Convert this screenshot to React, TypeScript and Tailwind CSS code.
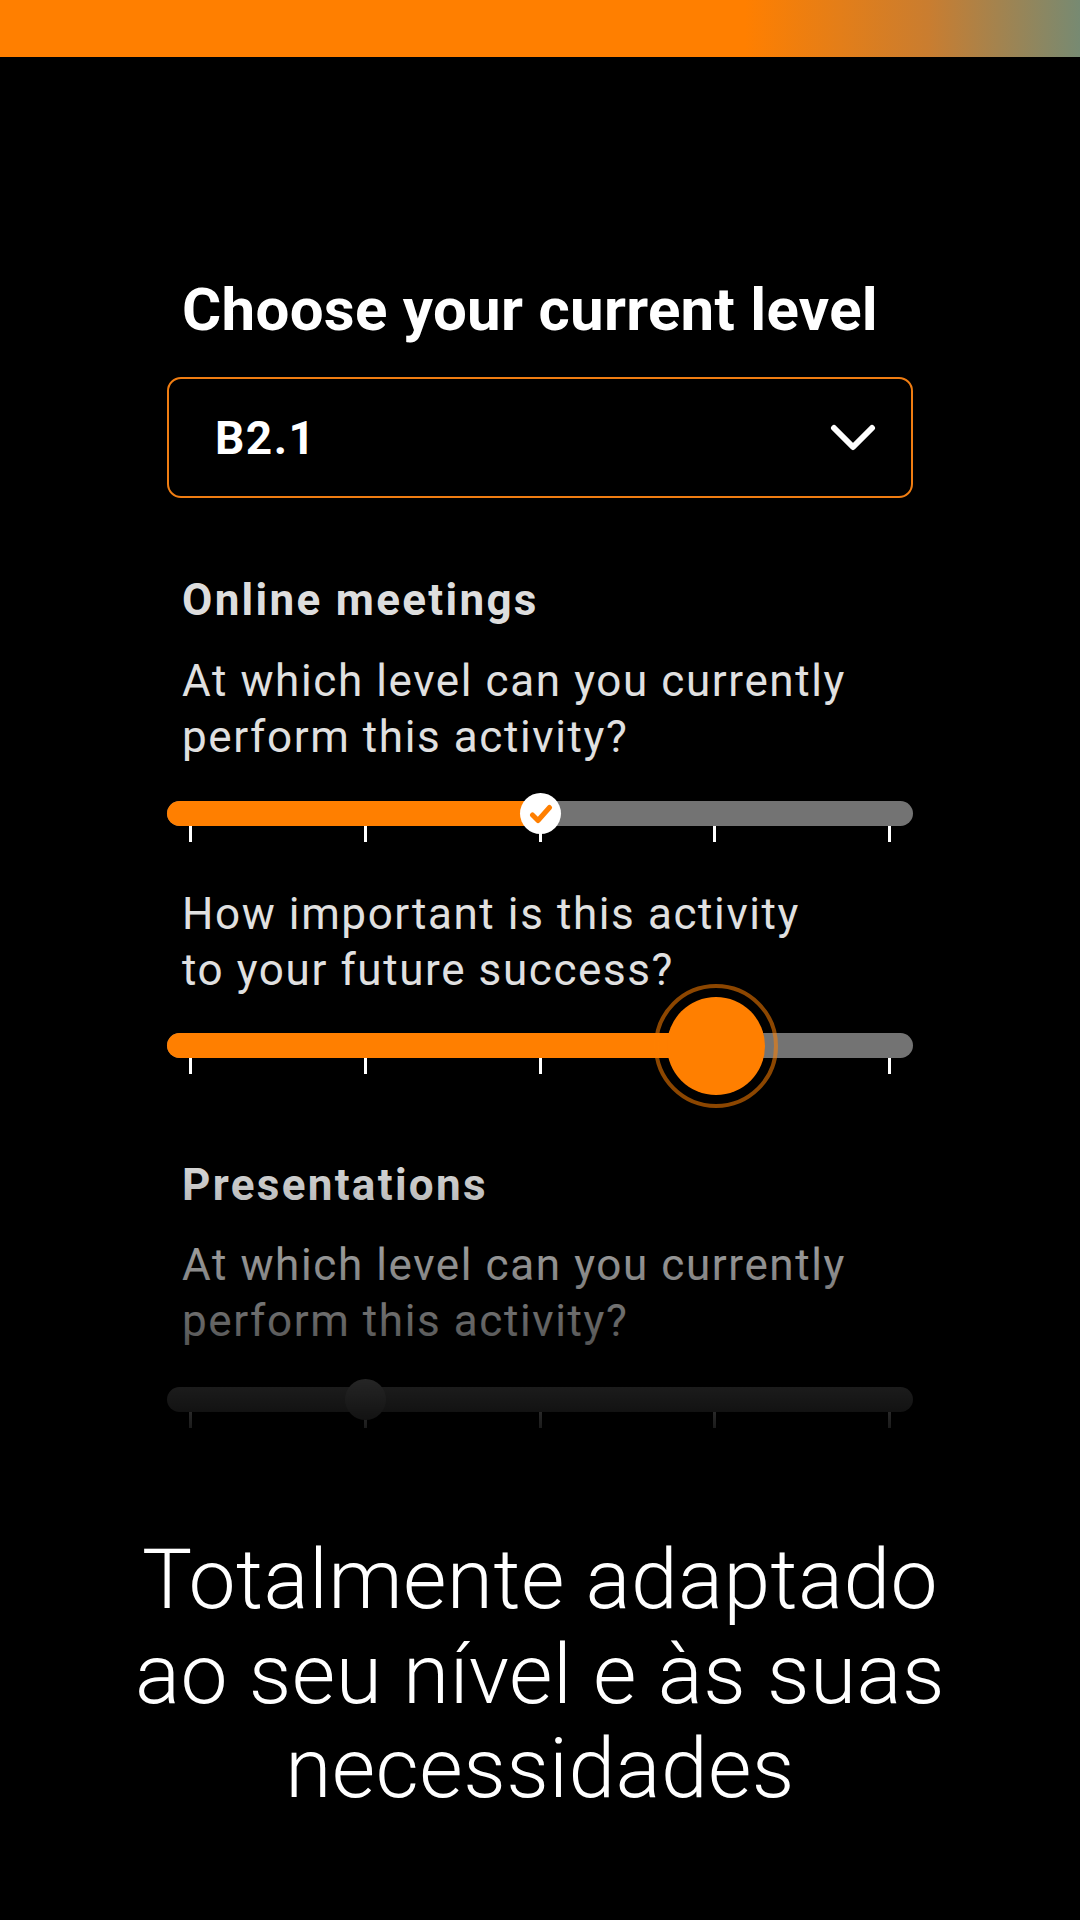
import React from "react";

const TICK_START = 23.5;
const TICK_STEP = 175;

type Thumb = "check" | "big" | "off";

function LevelSlider({ step, thumb }: { step: number; thumb: Thumb }) {
  const center = TICK_START + TICK_STEP * step;
  const off = thumb === "off";

  return (
    <div>
      <div className="relative h-[25px] rounded-full bg-[#737373]">
        {!off && (
          <div
            className="h-full rounded-full bg-[#ff7f00]"
            style={{ width: center + 10 }}
          />
        )}

        {thumb === "check" && (
          <div
            className="absolute top-[-8px] flex h-[41px] w-[41px] items-center justify-center rounded-full bg-white"
            style={{ left: center - 20.5 }}
          >
            <svg width="24" height="20" viewBox="0 0 24 20" fill="none">
              <path
                d="M3.5 11 L9 16.5 L20.5 3.5"
                stroke="#ff7f00"
                strokeWidth="5"
                strokeLinecap="round"
                strokeLinejoin="round"
              />
            </svg>
          </div>
        )}

        {thumb === "big" && (
          <div
            className="absolute top-[-49px] flex h-[124px] w-[124px] items-center justify-center rounded-full border-[4.5px] border-[#ff7f00]/55"
            style={{ left: center - 62 }}
          >
            <div className="h-[98px] w-[98px] rounded-full bg-[#ff7f00]" />
          </div>
        )}

        {off && (
          <div
            className="absolute top-[-8px] h-[41px] w-[41px] rounded-full bg-[#8c8c8c]"
            style={{ left: center - 20.5 }}
          />
        )}
      </div>

      <div className="flex justify-between px-[22px]">
        {[0, 1, 2, 3, 4].map((i) => (
          <div key={i} className="h-4 w-[3px] bg-white" />
        ))}
      </div>
    </div>
  );
}

export default function App() {
  return (
    <div className="min-h-[1920px] w-[1080px] bg-black font-['Roboto',sans-serif] text-white">
      <div className="h-[57px] bg-[linear-gradient(90deg,#ff7f00_0%,#ff7f00_69%,#c97d30_86%,#778a72_100%)]" />

      <main className="mx-auto w-[746px]">
        <h1 className="mt-[217px] pl-[15px] text-[60px] font-bold leading-[72px] tracking-[0.3px] text-white">
          Choose your current level
        </h1>

        <button className="mt-[31px] flex h-[121px] w-full items-center justify-between rounded-[14px] border-2 border-[#f07d12] pl-[46px] pr-[35px]">
          <span className="text-[46px] font-bold leading-none tracking-[1.5px] text-white">B2.1</span>
          <svg width="46" height="28" viewBox="0 0 46 28" fill="none">
            <path
              d="M4 4 L23 23 L42 4"
              stroke="white"
              strokeWidth="6"
              strokeLinecap="round"
              strokeLinejoin="round"
            />
          </svg>
        </button>

        <section className="mt-[74px]">
          <h2 className="pl-[15px] text-[44px] font-bold leading-[56px] tracking-[2.3px] text-[#dddddd]">
            Online meetings
          </h2>
          <p className="mt-[25px] pl-[15px] text-[44px] leading-[56px] tracking-[1.6px] text-[#e0e0e0]">
            At which level can you currently
            <br />
            perform this activity?
          </p>
          <div className="mt-[36px]">
            <LevelSlider step={2} thumb="check" />
          </div>

          <p className="mt-[44px] pl-[15px] text-[44px] leading-[56px] tracking-[1.6px] text-[#e0e0e0]">
            How important is this activity
            <br />
            to your future success?
          </p>
          <div className="mt-[35px]">
            <LevelSlider step={3} thumb="big" />
          </div>
        </section>

        <section className="relative mt-[83px]">
          <h2 className="pl-[15px] text-[44px] font-bold leading-[56px] tracking-[2.3px] text-[#dddddd]">
            Presentations
          </h2>
          <p className="mt-[24px] pl-[15px] text-[44px] leading-[56px] tracking-[1.6px] text-[#e0e0e0]">
            At which level can you currently
            <br />
            perform this activity?
          </p>
          <div className="mt-[38px]">
            <LevelSlider step={1} thumb="off" />
          </div>

          {/* fade out the next card */}
          <div className="pointer-events-none absolute inset-x-[-20px] top-[-2px] bottom-[-32px] bg-linear-to-b from-black/0 to-black" />
        </section>
      </main>

      <p className="mt-[105px] text-center text-[84px] font-light leading-[94.5px] tracking-[0.4px] text-white">
        Totalmente adaptado
        <br />
        ao seu nível e às suas
        <br />
        necessidades
      </p>
    </div>
  );
}
